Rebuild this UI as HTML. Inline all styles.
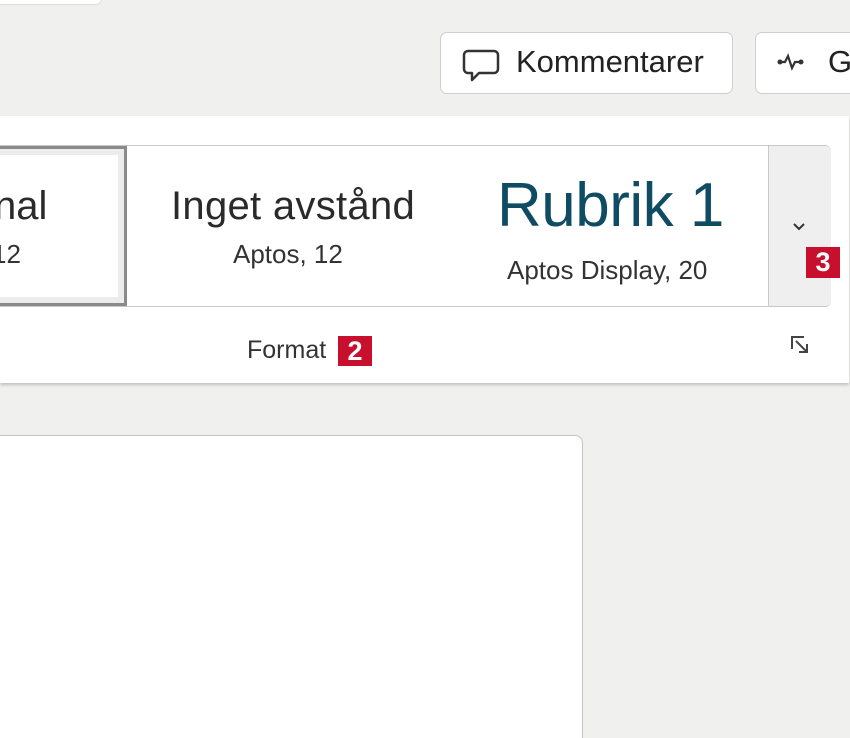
<!DOCTYPE html>
<html style="overflow:hidden;height:738px;"><head><style>
html,body{overflow:hidden;}
body{margin:0;width:850px;height:738px;background:#f0f0ee;position:relative;font-family:"Liberation Sans",sans-serif;}
.a{position:absolute;}
.btn{background:#fff;border:1.5px solid #cfcfcf;border-radius:7px;box-sizing:border-box;}
.t{position:absolute;white-space:nowrap;color:#2a2a2a;}
.badge{position:absolute;background:#c8102e;color:#fff;font-weight:bold;text-align:center;}
</style></head><body>
<div class="a" style="left:-10px;top:-10px;width:110px;height:13px;background:#fff;border:1px solid #ddd;border-radius:6px;"></div>
<div class="a btn" style="left:440px;top:32px;width:293px;height:62px;"></div>
<svg class="a" style="left:462px;top:48px" width="40" height="36" viewBox="0 0 40 36"><path d="M6 3h26a4 4 0 0 1 4 4v14a4 4 0 0 1-4 4H17l-7 7v-7H6a4 4 0 0 1-4-4V7a4 4 0 0 1 4-4z" fill="none" stroke="#333" stroke-width="2.5" stroke-linejoin="round"/></svg>
<div class="t" style="left:516px;top:44px;font-size:31px;color:#222;">Kommentarer</div>
<div class="a btn" style="left:755px;top:32px;width:95px;height:62px;border-right:none;border-radius:7px 0 0 7px;"></div>
<svg class="a" style="left:776px;top:53px" width="30" height="20" viewBox="0 0 30 20"><circle cx="4" cy="9" r="2.5" fill="#333"/><circle cx="25" cy="9" r="2.5" fill="#333"/><path d="M4 9h5l3-6 4 12 3-6h6" fill="none" stroke="#333" stroke-width="2.2"/></svg>
<div class="t" style="left:828px;top:44px;font-size:31px;color:#222;">G</div>
<div class="a" style="left:0;top:116px;width:849px;height:267px;background:#fff;box-shadow:0 2px 3px rgba(0,0,0,0.2);"></div>
<div class="a" style="left:-10px;top:145px;width:841px;height:162px;border:1.5px solid #c8c8c8;border-radius:6px;box-sizing:border-box;background:#fff;"></div>
<div class="a" style="left:768px;top:146px;width:62px;height:160px;background:#efefef;border-left:1.5px solid #c8c8c8;border-radius:0 5px 5px 0;"></div>
<div class="a" style="left:-10px;top:146px;width:137px;height:160px;border:3px solid #8a8a8a;box-sizing:border-box;"></div>
<div class="a" style="left:-7px;top:149px;width:131px;height:154px;border:6px solid #ececec;box-sizing:border-box;"></div>
<div class="t" style="left:-6px;top:184px;font-size:40px;">nal</div>
<div class="t" style="left:-8px;top:239px;font-size:26px;color:#333;">12</div>
<div class="t" style="left:171px;top:184px;font-size:40px;letter-spacing:0.3px;">Inget avstånd</div>
<div class="t" style="left:233px;top:239px;font-size:26px;color:#333;">Aptos, 12</div>
<div class="t" style="left:497px;top:170px;font-size:62px;color:#0f4c63;letter-spacing:-0.5px;">Rubrik 1</div>
<div class="t" style="left:507px;top:255px;font-size:26px;color:#333;">Aptos Display, 20</div>
<svg class="a" style="left:792px;top:222px" width="14" height="10" viewBox="0 0 14 10"><path d="M2 2l5 5 5-5" fill="none" stroke="#333" stroke-width="2"/></svg>
<div class="badge" style="left:806px;top:247px;width:34px;height:31px;font-size:27px;line-height:31px;">3</div>
<div class="t" style="left:247px;top:336px;font-size:25px;color:#333;">Format</div>
<div class="badge" style="left:338px;top:336px;width:34px;height:30px;font-size:27px;line-height:30px;">2</div>
<svg class="a" style="left:790px;top:335px" width="22" height="22" viewBox="0 0 22 22"><path d="M2 14V2h12" fill="none" stroke="#444" stroke-width="2"/><path d="M6 6l11 11M17 9v8H9" fill="none" stroke="#444" stroke-width="2"/></svg>
<div class="a" style="left:-10px;top:435px;width:593px;height:303px;background:#fff;border:1.5px solid #c4c4c4;border-bottom:none;border-radius:8px 8px 0 0;box-sizing:border-box;"></div>
</body></html>
